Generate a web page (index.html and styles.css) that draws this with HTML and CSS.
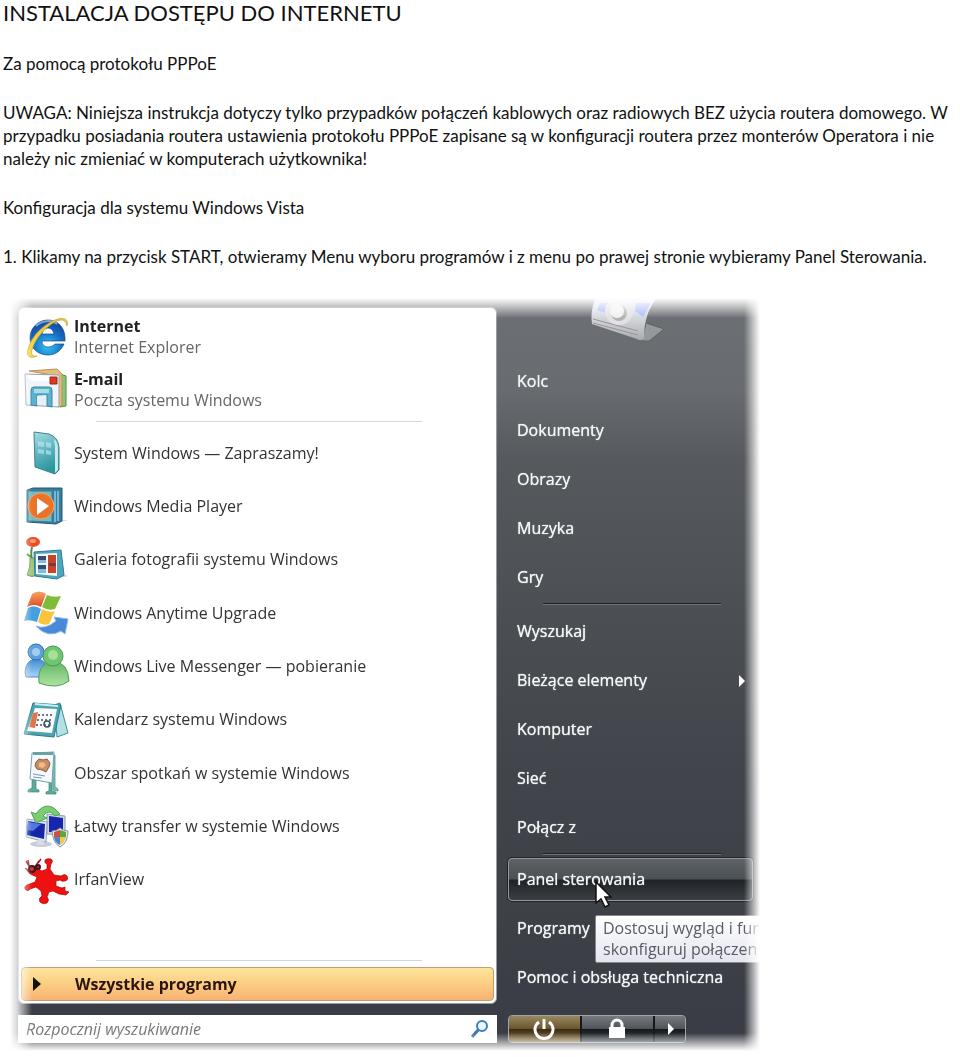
FILE: index.html
```
<!DOCTYPE html>
<html lang="pl">
<head>
    <meta charset="UTF-8">
    <meta name="viewport" content="width=device-width, initial-scale=1.0">
    <title>Instalacja dostępu do Internetu</title>
    <link rel="stylesheet" href="styles.css">
</head>
<body>
    <main class="page">
        <h1>INSTALACJA DOSTĘPU DO INTERNETU</h1>
        <p>Za pomocą protokołu PPPoE</p>
        <p>UWAGA: Niniejsza instrukcja dotyczy tylko przypadków połączeń kablowych oraz radiowych BEZ użycia routera domowego. W przypadku posiadania routera ustawienia protokołu PPPoE zapisane są w konfiguracji routera przez monterów Operatora i nie należy nic zmieniać w komputerach użytkownika!</p>
        <p>Konfiguracja dla systemu Windows Vista</p>
        <p>1. Klikamy na przycisk START, otwieramy Menu wyboru programów i z menu po prawej stronie wybieramy Panel Sterowania.</p>
    </main>

    <!-- Menu Start -->
    <div class="menu">
        <div class="left">
            <div class="programs">
                <a class="pinned" href="#">
                    <svg class="icon" viewBox="0 0 44 44">
                        <defs>
                            <radialGradient id="ie" cx=".5" cy=".75" r=".7"><stop offset="0" stop-color="#36c4f4"/><stop offset=".6" stop-color="#1470c8"/><stop offset="1" stop-color="#174a9c"/></radialGradient>
                            <linearGradient id="gold" x2="0" y2="1"><stop offset="0" stop-color="#e9c63f"/><stop offset="1" stop-color="#f4dc4c"/></linearGradient>
                        </defs>
                        <path d="M41 26H18c0 4 3 6 6 6 3 0 5-1 7-3h9c-3 7-9 11-16 11C14 40 6 33 6 23S14 5 24 5s18 8 17 21zM18 19h12c-1-4-3-6-6-6s-5 2-6 6z" fill="url(#ie)" stroke="#174a88" stroke-width=".7"/>
                        <path d="M12 11c5-5 16-7 21-2" fill="none" stroke="#a5cdf1" stroke-width="2" opacity=".7"/>
                        <path d="M43 11c2-6-2-9-9-7C22 7 7 21 4 34c-2 8 2 10 9 7-5 1-7-2-4-9C13 21 24 10 33 6c5-2 9-1 10 5z" fill="url(#gold)" stroke="#b9952c" stroke-width=".6"/>
                    </svg>
                    <span><b>Internet</b><small>Internet Explorer</small></span>
                </a>
                <a class="pinned" href="#">
                    <svg class="icon" viewBox="0 0 44 44">
                        <path d="M33 5l9 3v30l-6 1z" fill="#8cc474" stroke="#4e8e4e"/>
                        <path d="M5 3l28-2 5 5v32l-4 1V8z" fill="#e0bf78" stroke="#c08d56"/>
                        <path d="M1 6l34 1v32L2 37z" fill="#f1f4fa" stroke="#91a2b7"/>
                        <path d="M2 7l32 1-8 5H8z" fill="#fff"/>
                        <path d="M26 9h7v7h-7z" fill="#d83a1f" stroke="#9c2714"/>
                        <path d="M7 22q0-3 3-3h15q3 0 3 3v17l-5-1V27H13v11l-6-1z" fill="#5cb1cd" stroke="#3a86a6"/>
                        <path d="M10 21h15v4H10z" fill="#a9dce9"/>
                        <path d="M13 28l9-1v9l-9 1z" fill="#e4f1f6"/>
                    </svg>
                    <span><b>E-mail</b><small>Poczta systemu Windows</small></span>
                </a>
            </div>
            <hr class="line">
            <div class="recent">
                <a href="#">
                    <svg class="icon" viewBox="0 0 44 44">
                        <defs><linearGradient id="box" x2=".3" y2="1"><stop offset="0" stop-color="#a5dfe6"/><stop offset=".5" stop-color="#65b5c4"/><stop offset="1" stop-color="#29979b"/></linearGradient></defs>
                        <path d="M10 1l15 2q9 3 10 13v23l-4 4-20-7z" fill="url(#box)" stroke="#44818c"/>
                        <path d="M30 8q4 3 4 10v21l-3 3V15z" fill="#c4e9ee"/>
                        <path d="M14 10l6 1v5l-6-1zm8 1l5 1v5l-5-1zm-8 7l6 1v4l-6-1zm8 1l5 1v4l-5-1z" fill="#b7e4e9" opacity=".7"/>
                    </svg>
                    <span>System Windows — Zapraszamy!</span>
                </a>
                <a href="#">
                    <svg class="icon" viewBox="0 0 44 44">
                        <path d="M29 37l15-1-14 4z" fill="#b9cbd4"/>
                        <path d="M9 4h29v33l-6 3-29-2V6z" fill="#397b9b" stroke="#245977"/>
                        <path d="M31 7v31m3-31v30" stroke="#86cdec" stroke-width="1.5"/>
                        <path d="M4 7h24v31L4 37z" fill="#70bcc2" stroke="#377d98"/>
                        <circle cx="17" cy="22" r="13" fill="#ea7328" stroke="#f5a664"/>
                        <path d="M13 14l12 8-12 9z" fill="#fff"/>
                    </svg>
                    <span>Windows Media Player</span>
                </a>
                <a href="#">
                    <svg class="icon" viewBox="0 0 44 44">
                        <path d="M34 36l10 3-14 3z" fill="#b9cbd4"/>
                        <path d="M8 10q-2 8 1 15m-1-4l-5-4" fill="none" stroke="#538b43" stroke-width="2"/>
                        <ellipse cx="9" cy="5" rx="7" ry="5" fill="#e94d29"/>
                        <ellipse cx="9" cy="4" rx="3" ry="2" fill="#ff9c65"/>
                        <path d="M6 21h6q-2 9 1 17-5 3-10 0 4-8 3-17z" fill="#a2c57d" stroke="#6a9658"/>
                        <path d="M10 15l27-2 3 25-7 4-22-3z" fill="#50a4bd" stroke="#297e98"/>
                        <path d="M12 17l21-1v23l-21-2z" fill="#f3f6f7"/>
                        <path d="M14 19h8v7h-8zm0 9h8v7h-8z" fill="#354e6e"/>
                        <path d="M14 23h8v3h-8zm0 9h8v4h-8z" fill="#81bbe0"/>
                        <path d="M24 18h8v18h-8z" fill="#ca4325"/><path d="M25 26h7v3h-7z" fill="#78394e"/>
                    </svg>
                    <span>Galeria fotografii systemu Windows</span>
                </a>
                <a href="#">
                    <svg class="icon" viewBox="0 0 44 44">
                        <defs><linearGradient id="flag" x2="0" y2="1"><stop offset="0" stop-color="#f7a366"/><stop offset="1" stop-color="#d94c21"/></linearGradient></defs>
                        <path d="M8 3q7-5 14 0l-5 13q-7-4-14 0z" fill="url(#flag)"/>
                        <path d="M23 4q6 3 14 1l-6 13q-7 2-13-2z" fill="#7fbc39"/>
                        <path d="M4 17q6-4 13 1l-4 13q-7-3-13-1z" fill="#459fe0"/>
                        <path d="M18 18q7 4 13 2l-6 13q-6 2-11-2z" fill="#f9c43c"/>
                        <path d="M12 35q9 4 20-5l-2-4 14 2-3 15-4-3q-13 8-25-5z" fill="#4a89d8" stroke="#8ab6e8"/>
                    </svg>
                    <span>Windows Anytime Upgrade</span>
                </a>
                <a href="#">
                    <svg class="icon" viewBox="0 0 44 44">
                        <defs>
                            <linearGradient id="blue" x2="0" y2="1"><stop offset="0" stop-color="#3f8cd0"/><stop offset="1" stop-color="#a5d2fa"/></linearGradient>
                            <linearGradient id="green" x2="0" y2="1"><stop offset="0" stop-color="#61b765"/><stop offset="1" stop-color="#afe3a1"/></linearGradient>
                        </defs>
                        <path d="M1 28q1-13 12-13 8 0 11 11l-1 7H2z" fill="url(#blue)" stroke="#5283bb"/>
                        <circle cx="12" cy="8" r="8" fill="#5ba0de" stroke="#386da8"/>
                        <circle cx="12" cy="8" r="4" fill="#a4cdf0"/>
                        <path d="M15 39q-2-21 15-21 14 0 15 19-12 9-30 2z" fill="url(#green)" stroke="#559b55"/>
                        <circle cx="29" cy="12" r="10" fill="#70c572" stroke="#4a9a51"/>
                        <circle cx="29" cy="11" r="5" fill="#a6e09a"/>
                    </svg>
                    <span>Windows Live Messenger — pobieranie</span>
                </a>
                <a href="#">
                    <svg class="icon" viewBox="0 0 44 44">
                        <path d="M30 8l6-2 8 30-11 4z" fill="#b5e0e5" stroke="#3a929a"/>
                        <path d="M9 6l28 2-7 32-30-3z" fill="#4aa5b1" stroke="#2c7888"/>
                        <path d="M11 11l22 1-5 24-25-2z" fill="#fafafa"/>
                        <path d="M9 16l5-1-3 16-6-1z" fill="#dd7648"/>
                        <path d="M14 18h15m-16 5h14m-15 5h13" stroke="#6a7890" stroke-width="2" stroke-dasharray="2 2"/>
                        <circle cx="23" cy="27" r="3" fill="none" stroke="#35526b" stroke-width="1.5"/>
                        <path d="M11 7l23 2" stroke="#c8f0f2" stroke-width="2"/>
                    </svg>
                    <span>Kalendarz systemu Windows</span>
                </a>
                <a href="#">
                    <svg class="icon" viewBox="0 0 44 44">
                        <path d="M8 29h4v9l3 1v2H4v-2l4-2zm17 0h3v11l4 1v2H22v-2l3-1z" fill="#5da99a" stroke="#3c8b80" stroke-width=".7"/>
                        <path d="M28 3l3 1v32l3 2v2l-5-1z" fill="#7fc0b4" stroke="#408c80" stroke-width=".7"/>
                        <path d="M8 2l22-1-2 31-22-4z" fill="#f6f8fb" stroke="#6fa2ad"/>
                        <path d="M9 1h20v3H9z" fill="#65a4a3"/>
                        <path d="M12 11l3-3 4 1 4-1 3 4-1 4-3 5-4-2-5-1-2-3z" fill="#c58e61" stroke="#83624c"/>
                        <path d="M15 12l4-1 3 3-3 3-4-1z" fill="#f0ba82"/>
                        <path d="M9 23l12 2m-12 1l9 1" stroke="#789bba"/>
                    </svg>
                    <span>Obszar spotkań w systemie Windows</span>
                </a>
                <a href="#">
                    <svg class="icon" viewBox="0 0 44 44">
                        <ellipse cx="17" cy="40" rx="11" ry="3" fill="#c4cdd8"/>
                        <path d="M23 10l18 2v19l-18-1z" fill="#cad5e2" stroke="#8e9eb1"/><path d="M25 12l14 2v14H25z" fill="#1727ad"/>
                        <path d="M3 15l20 3-1 20-20-5z" fill="#dce5ee" stroke="#98a5b7"/><path d="M4 17l17 3-1 15-17-4z" fill="#1527a7"/>
                        <path d="M4 18l13 2-8 7-6-1z" fill="#5377de"/>
                        <path d="M15 35l5 2v4h-8z" fill="#d9dce6"/>
                        <path d="M12 19l-5-11 5 2Q23-6 36 10l-5 2q-6-8-12 0l4 2z" fill="#7bce70" stroke="#4ba55a"/>
                        <path d="M28 27q5 0 8-3 3 3 8 3 0 12-8 16-7-4-8-16z" fill="#e9edf0" stroke="#8795a2"/>
                        <path d="M30 28l6-2v7h-6z" fill="#d74e34"/><path d="M36 26l6 2v5h-6z" fill="#57a747"/><path d="M30 33h6v8q-5-2-6-8z" fill="#4984c8"/><path d="M36 33h6q-1 5-6 8z" fill="#f1c942"/>
                    </svg>
                    <span>Łatwy transfer w systemie Windows</span>
                </a>
                <a href="#">
                    <svg class="icon" viewBox="0 0 44 44">
                        <path d="M14 12l4 2 5-2V7q-3-1-2-4 2-2 6-1 3 2 0 5l-1 5 4 6 7 1q4-3 6 0 2 4-2 5-3 1-5-1l-4 1v5l6 2 3-1v4l4 1-3 3-7-1-6-3-4 1-2 5q3 3 0 6-4 2-7-1-2-4 2-6l-1-5-5-4-6 2q-2 3-4 1-3-3 1-5l8-3 2-5-7-3-5-6 6 3z" fill="#ee1111" stroke="#a30b0b" stroke-width=".7"/>
                        <path d="M2 4l3 5 6 1 4-6M4 3l1 6m9-3l3-4" stroke="#b01018" stroke-width="1.5" fill="none"/>
                        <circle cx="8" cy="12" r="3" fill="#c33" stroke="#401018" stroke-width="2"/><circle cx="14" cy="10" r="2" fill="#c33" stroke="#401018" stroke-width="2"/>
                    </svg>
                    <span>IrfanView</span>
                </a>
            </div>
            <hr class="line line-bottom">
            <button class="all" type="button"><svg viewBox="0 0 10 16"><path d="M1 1l8 7-8 7z" fill="#111"/></svg>Wszystkie programy</button>
        </div>

        <div class="right">
            <svg class="user" viewBox="0 0 80 44">
                <defs><linearGradient id="card" x2="0" y2="1"><stop offset="0" stop-color="#dde6fb"/><stop offset=".5" stop-color="#d2d4d9"/><stop offset="1" stop-color="#a9abae"/></linearGradient></defs>
                <path d="M54 42l4-18 18 6-15 12z" fill="#96999b" stroke="#606366"/>
                <path d="M7 0h61q-12 15-12 39-2 4-7 1L4 25Q2 14 7 0z" fill="url(#card)"/>
                <path d="M12 4h16l-7 11-12-4zm36 0h15l-8 14-8-6z" fill="#a8baf3"/>
                <path d="M5 20l45 12M5 24l45 12" stroke="#96979a" fill="none"/>
                <circle cx="31" cy="12" r="14" fill="#e2e2e5"/><circle cx="31" cy="14" r="8" fill="#b2b3b4"/><circle cx="29" cy="12" r="7" fill="#f1f1ef"/>
            </svg>
            <nav class="places">
                <a href="#">Kolc</a>
                <a href="#">Dokumenty</a>
                <a href="#">Obrazy</a>
                <a href="#">Muzyka</a>
                <a href="#">Gry</a>
                <hr>
                <a href="#">Wyszukaj</a>
                <a class="more" href="#">Bieżące elementy<svg viewBox="0 0 8 12"><path d="M1 0l6 6-6 6z" fill="#fff"/></svg></a>
                <a href="#">Komputer</a>
                <a href="#">Sieć</a>
                <a href="#">Połącz z</a>
                <hr>
                <a class="active" href="#">Panel sterowania
                    <svg class="cursor" viewBox="0 0 18 28"><path d="M2 1v21l5-4 4 8 4-2-4-8h6z" fill="#fff" stroke="#111" stroke-width="1.5"/></svg>
                    <span class="tooltip">Dostosuj wygląd i fun<br>skonfiguruj połączen</span>
                </a>
                <a href="#">Programy</a>
                <a href="#">Pomoc i obsługa techniczna</a>
            </nav>
        </div>

        <div class="search">
            <input type="text" placeholder="Rozpocznij wyszukiwanie" aria-label="Rozpocznij wyszukiwanie">
            <svg viewBox="0 0 18 18"><path d="M1 17l7-8" stroke="#3f74ae" stroke-width="3"/><circle cx="11" cy="6" r="5" fill="#eaf6fd" stroke="#3f7cb8" stroke-width="2"/></svg>
        </div>

        <div class="power">
            <button class="off" type="button" aria-label="Zasilanie"><svg viewBox="0 0 22 22"><path d="M6 4a9 9 0 1 0 10 0M11 1v10" fill="none" stroke="#fff" stroke-width="3"/></svg></button>
            <button type="button" aria-label="Zablokuj"><svg viewBox="0 0 22 22"><path d="M6 10V7a5 5 0 0 1 10 0v3" fill="none" stroke="#fff" stroke-width="3"/><path d="M3 9h16v11H3z" fill="#fff"/></svg></button>
            <button class="arrow" type="button" aria-label="Więcej opcji"><svg viewBox="0 0 22 22"><path d="M9 5l6 6-6 6z" fill="#fff"/></svg></button>
        </div>
    </div>
</body>
</html>
```
FILE: styles.css
```
* {
    margin: 0;
    padding: 0;
    box-sizing: border-box;
}

body {
    background: #fff;
    color: #111;
    font-family: Lato, "Liberation Sans", sans-serif;
}

/* Opis */
.page {
    padding-left: 3px;
    font-size: 17px;
    line-height: 23px;
}

h1 {
    font-size: 22px;
    font-weight: normal;
    line-height: 26px;
}

.page p {
    margin-top: 26px;
}

/* Menu Start */
.menu {
    display: grid;
    grid-template-columns: 479fr 265fr;
    grid-template-rows: auto 28px;
    row-gap: 11px;
    max-width: 752px;
    margin: 30px 0 0 10px;
    padding: 9px 0 8px 8px;
    background: linear-gradient(#6c7074 0, #686b6f 90px, #56595d 160px, #4b4f54 320px, #41454b 480px, #393c44 100%);
    font-family: "Open Sans", "Noto Sans", sans-serif;
    font-size: 16px;
    mask-image: linear-gradient(to right, transparent, rgba(0, 0, 0, 0.2) 7px, #000 22px, #000 calc(100% - 18px), transparent calc(100% - 2px)), linear-gradient(transparent, #000 20px, #000 calc(100% - 18px), transparent);
    mask-composite: intersect;
}

.menu a {
    text-decoration: none;
}

/* Lewa kolumna */
.left {
    display: flex;
    flex-direction: column;
    padding: 2px;
    background: #fff;
    border: 1px solid #9a9da0;
    border-radius: 6px;
}

.left a {
    display: flex;
    align-items: center;
    gap: 6px;
    padding-left: 3px;
    color: #333;
}

.icon {
    flex: none;
    width: 44px;
    height: 44px;
    overflow: visible;
}

.pinned {
    height: 53px;
    line-height: 21px;
}

.pinned b,
.pinned small {
    display: block;
    font-size: 16px;
}

.pinned b {
    color: #222;
}

.pinned small {
    color: #666;
}

.line {
    width: 326px;
    margin: 5px 0 4px 75px;
    border: 0;
    border-top: 1px solid #d5d8da;
}

.recent {
    display: grid;
    grid-template-rows: repeat(9, 1fr);
    height: 480px;
}

.line-bottom {
    margin-top: 54px;
    margin-bottom: 6px;
}

.all {
    display: flex;
    align-items: center;
    gap: 33px;
    height: 34px;
    padding-left: 10px;
    border: 1px solid #c79b6b;
    border-radius: 4px;
    background: linear-gradient(#fbe49b, #fcd287 40%, #f8b273);
    color: #2a1510;
    font: bold 16px "Open Sans", sans-serif;
}

.all svg {
    width: 10px;
    height: 16px;
}

/* Prawa kolumna */
.user {
    display: block;
    width: 80px;
    height: 44px;
    margin: -8px 0 14px 91px;
}

.places {
    color: #f3f5f6;
    line-height: 49px;
}

.places a {
    display: block;
    height: 49px;
    padding-left: 20px;
    color: #f3f5f6;
    text-shadow: 0 0 1px #fff;
}

.places hr {
    width: 178px;
    height: 2px;
    margin: 1px 0 2px 46px;
    border: 0;
    border-top: 1px solid #1f2226;
    border-bottom: 1px solid #70757a;
}

.places .more {
    display: flex;
    align-items: center;
    justify-content: space-between;
    padding-right: 16px;
}

.more svg {
    width: 8px;
    height: 12px;
}

.places .active {
    position: relative;
    height: 43px;
    margin: 3px 9px 3px 11px;
    padding-left: 8px;
    border: 1px solid #92979b;
    border-radius: 4px;
    background: linear-gradient(#5d6266, #4b5054 48%, #1f2328 52%, #3c4045);
    box-shadow: 0 0 0 1px #20242a;
    line-height: 41px;
}

.cursor {
    position: absolute;
    left: 85px;
    top: 22px;
    width: 18px;
    height: 28px;
    z-index: 2;
}

.tooltip {
    position: absolute;
    left: 86px;
    top: 56px;
    z-index: 1;
    width: 170px;
    height: 48px;
    padding: 2px 0 2px 7px;
    border: 1px solid #888;
    border-radius: 2px;
    background: linear-gradient(#fff, #e4e5f0);
    color: #5a5a62;
    line-height: 21px;
    text-shadow: none;
    white-space: nowrap;
}

/* Wyszukiwanie */
.search {
    display: flex;
    align-items: center;
    padding: 0 8px;
    background: #fff;
}

.search input {
    flex: 1;
    min-width: 0;
    border: 0;
    outline: 0;
    background: none;
    font: italic 16px "Open Sans", sans-serif;
}

.search input::placeholder {
    color: #777;
    opacity: 1;
}

.search svg {
    width: 18px;
    height: 18px;
}

/* Zasilanie */
.power {
    display: flex;
    width: 178px;
    margin-left: 11px;
    border: 1px solid #a2a5a8;
    border-radius: 4px;
    overflow: hidden;
}

.power button {
    display: flex;
    flex: 72;
    align-items: center;
    justify-content: center;
    border: 0;
    border-right: 2px solid #15181c;
    background: linear-gradient(#777b7f, #50555a 48%, #15191d 52%, #43484d);
}

.power .off {
    background: linear-gradient(#98895f, #6b5630 48%, #3c2a12 52%, #8b7747);
}

.power .arrow {
    flex: 31;
    border-right: 0;
}

.power svg {
    width: 22px;
    height: 22px;
}
```
